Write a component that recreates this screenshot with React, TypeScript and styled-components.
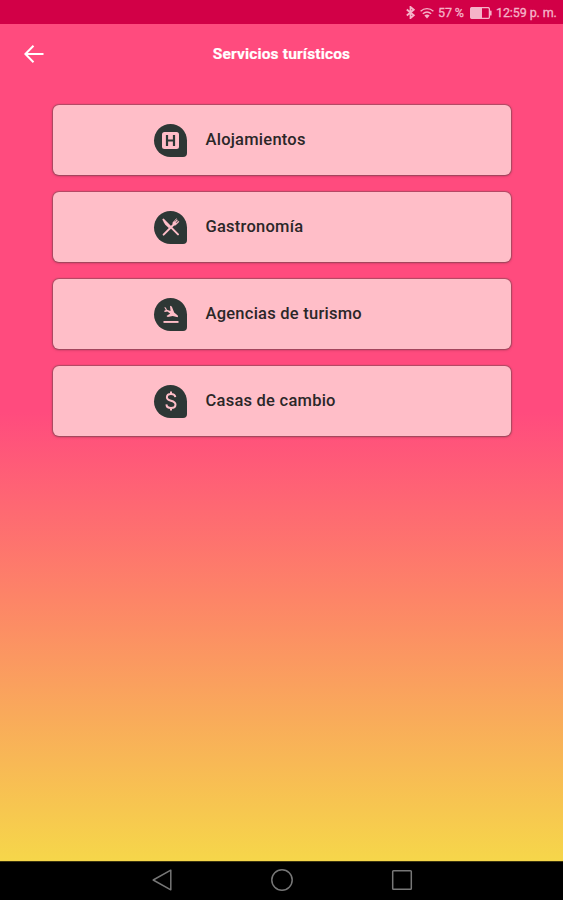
import React from 'react';
import styled, { createGlobalStyle } from 'styled-components';

const GlobalStyle = createGlobalStyle`
  * {
    box-sizing: border-box;
  }

  body {
    margin: 0;
    font-family: Roboto, 'Liberation Sans', sans-serif;
  }
`;

const Screen = styled.div`
  height: 900px;
  display: flex;
  flex-direction: column;
  overflow: hidden;
  background: linear-gradient(180deg, #ff4b7e 0, #ff4b7e 412px, #fd8567 600px, #f9a95b 712px, #f6d64a 860px);
`;

const StatusBar = styled.div`
  height: 24px;
  flex: none;
  padding: 1px 6px 0 0;
  display: flex;
  align-items: center;
  justify-content: flex-end;
  gap: 4px;
  background: #d20047;
  color: #f5b3c8;
  font-size: 12.5px;
  white-space: nowrap;

  svg {
    display: block;
    flex: none;
  }
`;

const StatusText = styled.span<{ $width: number }>`
  width: ${({ $width }) => $width}px;
  letter-spacing: -0.1px;
  -webkit-text-stroke: 0.3px currentColor;
`;

const Header = styled.header`
  height: 60px;
  flex: none;
  padding: 0 24px;
  display: grid;
  grid-template-columns: 20px 1fr 20px;
  align-items: center;
`;

const BackButton = styled.button`
  padding: 0;
  border: none;
  background: none;
  line-height: 0;
`;

const Title = styled.h1`
  margin: 0;
  color: #fff;
  font-size: 15.5px;
  font-weight: 700;
  line-height: 20px;
  letter-spacing: 0.15px;
  text-align: center;
  -webkit-text-stroke: 0.2px currentColor;
`;

const ServiceList = styled.main`
  flex: 1;
  padding: 20.5px 52.5px 0 53px;
  display: flex;
  flex-direction: column;
  gap: 16.5px;
`;

const ServiceCard = styled.button`
  height: 70.5px;
  flex: none;
  padding: 0 0 0 101px;
  display: flex;
  align-items: center;
  gap: 18.5px;
  border: none;
  border-radius: 6px;
  background: #ffbec8;
  box-shadow: 0 0 1px 1px rgba(100, 75, 75, 0.5), 0 1px 3px rgba(90, 30, 50, 0.35);
  text-align: left;
`;

const Badge = styled.span`
  width: 33px;
  height: 33px;
  margin-top: 1px;
  flex: none;
  display: flex;
  align-items: center;
  justify-content: center;
  border-radius: 50% 50% 4px 50%;
  background: #2d3735;
  color: #ffbec8;
`;

const Label = styled.span`
  color: #2b2728;
  font: 500 16.5px/22px Roboto, 'Liberation Sans', sans-serif;
  letter-spacing: 0.24px;
`;

const NavBar = styled.nav`
  height: 39px;
  flex: none;
  padding-bottom: 2px;
  display: flex;
  align-items: center;
  justify-content: center;
  gap: 96px;
  border-top: 1px solid #3b340f;
  background: #000;
`;

const BluetoothIcon = () => (
  <svg width="11" height="13" viewBox="0 0 11 13" fill="none" stroke="currentColor" strokeWidth="1.8">
    <path d="M1.8 3.5l7 5.8-3.3 2.8V.9l3.3 2.8-7 5.8" />
  </svg>
);

const WifiIcon = () => (
  <svg width="14" height="12" viewBox="0 0 14 12" fill="none" stroke="currentColor" strokeWidth="1.4">
    <path d="M.6 4.2C4.3.8 9.7.8 13.4 4.2M2.8 6.8c2.5-2.2 5.9-2.2 8.4 0" />
    <path d="M4.4 8.4c1.5-1.2 3.7-1.2 5.2 0L7 11.5z" fill="currentColor" stroke="none" />
  </svg>
);

const BatteryIcon = () => (
  <svg width="22" height="12" viewBox="0 0 22 12">
    <rect x="0.6" y="0.6" width="18.8" height="10.8" rx="1.5" fill="none" stroke="currentColor" strokeWidth="1.3" />
    <rect x="1" y="1" width="11" height="10" fill="currentColor" />
    <rect x="20" y="3.5" width="1.6" height="5" rx="0.6" fill="currentColor" />
  </svg>
);

const HotelIcon = () => (
  <svg width="17" height="17" viewBox="0 0 17 17">
    <rect width="17" height="17" rx="2.5" fill="currentColor" />
    <path d="M5 3v11M12 3v11M5 8.5h7" fill="none" stroke="#2d3735" strokeWidth="2.2" />
  </svg>
);

const CutleryIcon = () => (
  <svg width="20" height="20" viewBox="0 0 20 20" fill="none" stroke="currentColor" strokeLinecap="round">
    <path d="M2.4 2.6L17 17.4" strokeWidth="2" />
    <path d="M2.2 2.2L9.6 9.8 8 11.2 4.3 7.8Q2 5.4 2.2 2.2z" fill="currentColor" stroke="none" />
    <path d="M2.6 17.6L13 7.2" strokeWidth="2" />
    <path
      d="M15.2 1.8l-3 3.2c-.8 1-.6 2 .1 2.7s1.8.9 2.7.1l3.1-3-.7-.7-2.1 2-.7-.7 2-2.1-.7-.7-2 2.1-.6-.6 2.1-2z"
      fill="currentColor"
      strokeWidth="0.4"
    />
  </svg>
);

const PlaneIcon = () => (
  <svg width="20" height="20" viewBox="0 0 20 20" fill="currentColor">
    <path d="M3.2 3.2l1.6.4 1.1 2.2 3.6 1.3L9 1.8l1.8.8 2.4 6 3.3 2.7c1.1 1 .5 2.1-.8 1.8l-4-1.2-5 1.1-1.2-1 3.7-2.4-2.9-2-2.4.3-1-.9 2-1z" />
    <rect x="2.5" y="17" width="15" height="1.9" />
  </svg>
);

const DollarIcon = () => (
  <svg width="14" height="22" viewBox="0 0 14 22" fill="none" stroke="currentColor" strokeWidth="2">
    <path d="M11.3 7.2C11 5 9.4 4 7 4S2.9 5.2 2.9 7.3c0 2.2 1.7 2.9 4.1 3.5 2.5.7 4.5 1.5 4.5 3.7 0 2.1-1.8 3.5-4.5 3.5s-4.4-1.3-4.6-3.7M7 1.5V4M7 18v2.5" />
  </svg>
);

const services = [
  { label: 'Alojamientos', icon: <HotelIcon /> },
  { label: 'Gastronomía', icon: <CutleryIcon /> },
  { label: 'Agencias de turismo', icon: <PlaneIcon /> },
  { label: 'Casas de cambio', icon: <DollarIcon /> },
];

const App: React.FC = () => {
  return (
    <>
      <GlobalStyle />
      <Screen>
        <StatusBar>
          <BluetoothIcon />
          <WifiIcon />
          <StatusText $width={28}>57 %</StatusText>
          <BatteryIcon />
          <StatusText $width={61}>12:59 p. m.</StatusText>
        </StatusBar>

        <Header>
          <BackButton aria-label="Volver">
            <svg width="20" height="18" viewBox="0 0 20 18" fill="none" stroke="#fff" strokeWidth="2">
              <path d="M19.5 9H1.5M9.5 0.8L1.4 9l8.1 8.2" />
            </svg>
          </BackButton>
          <Title>Servicios turísticos</Title>
        </Header>

        <ServiceList>
          {services.map(({ label, icon }) => (
            <ServiceCard key={label}>
              <Badge>{icon}</Badge>
              <Label>{label}</Label>
            </ServiceCard>
          ))}
        </ServiceList>

        <NavBar>
          <svg width="24" height="24" viewBox="0 0 24 24" fill="none" stroke="#777" strokeWidth="1.5">
            <path d="M20.8 2.2v19.6L3.2 12z" strokeLinejoin="round" />
          </svg>
          <svg width="24" height="24" viewBox="0 0 24 24" fill="none" stroke="#777" strokeWidth="1.5">
            <circle cx="12" cy="12" r="10.2" />
          </svg>
          <svg width="24" height="24" viewBox="0 0 24 24" fill="none" stroke="#777" strokeWidth="1.5">
            <rect x="2.7" y="2.7" width="18.6" height="18.6" rx="0.8" />
          </svg>
        </NavBar>
      </Screen>
    </>
  );
};

export default App;
